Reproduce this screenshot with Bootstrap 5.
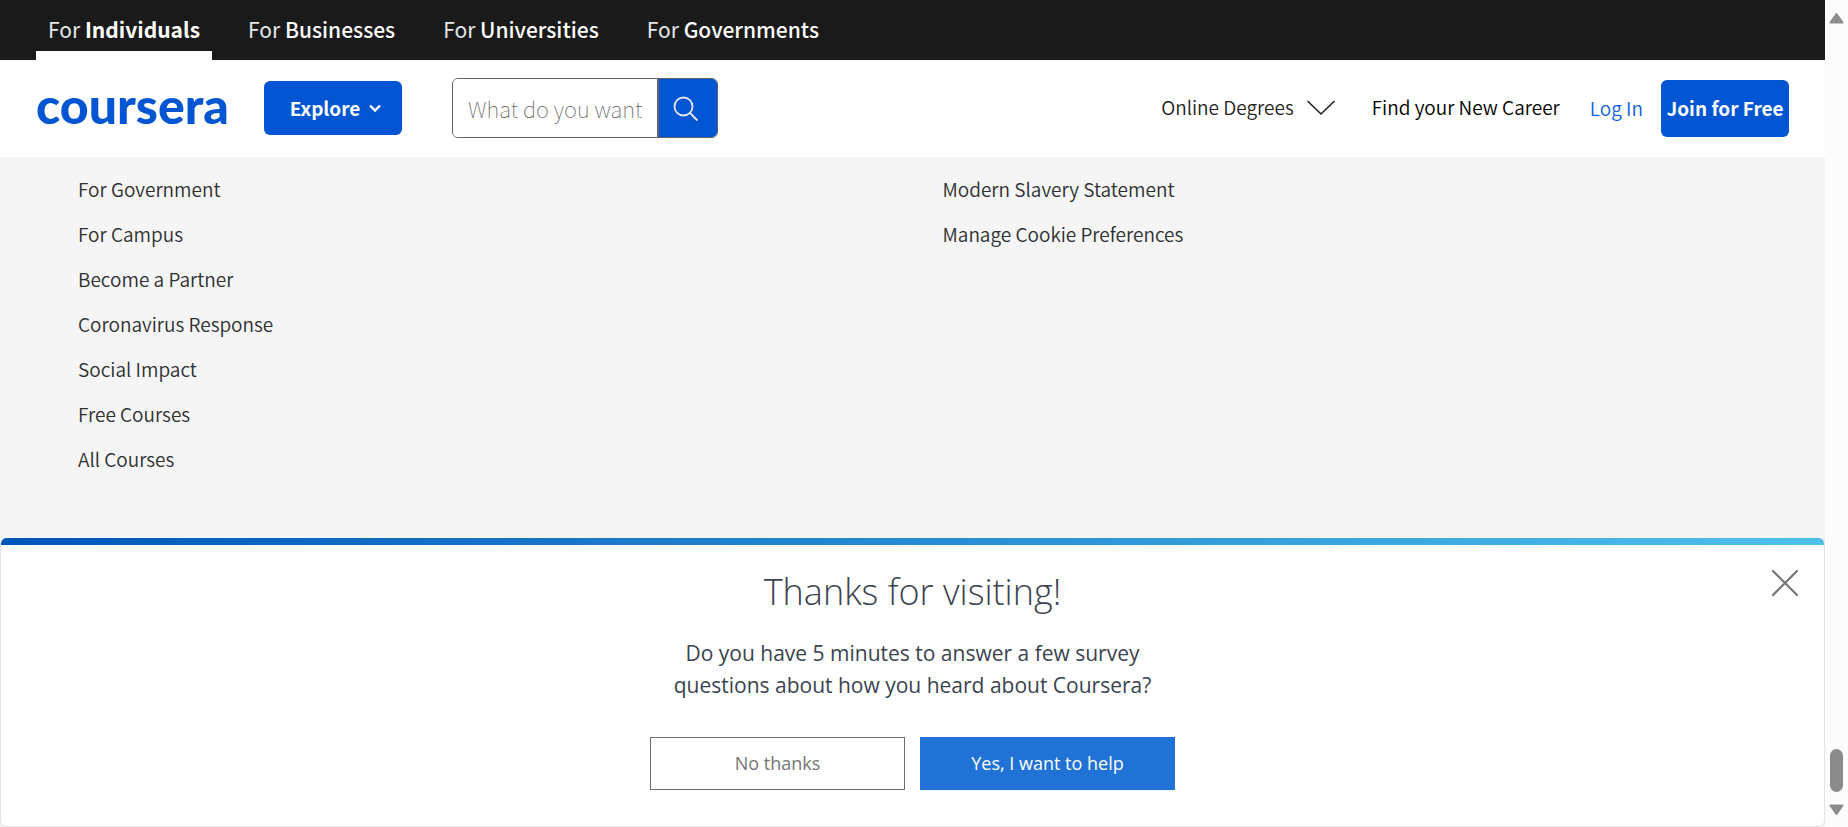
<!DOCTYPE html>
<html lang="en">
<head>
<meta charset="utf-8">
<meta name="viewport" content="width=device-width, initial-scale=1">
<title>Coursera</title>
<link href="https://cdn.jsdelivr.net/npm/bootstrap@5.3.0/dist/css/bootstrap.min.css" rel="stylesheet">
<style>
:root { --brand: #0056d2; --ink: #1f1f1f; }
body { font-family: "Noto Sans CJK SC", "Noto Sans", sans-serif; font-size: 19px; line-height: 24px; color: var(--ink); background: #fff; }
a { text-decoration: none; }

.audience-bar { background: #1a1a1a; padding: 0 36px; gap: 24px; height: 60px; }
.audience-bar .nav-link { color: #fff; font-size: 21px; line-height: 30px; padding: 14px 12px 7px; border-bottom: 9px solid transparent; font-weight: 500; }
.audience-bar .nav-link span { font-weight: 400; color: #e5e7e8; }
.audience-bar .nav-link.active { border-color: #fff; font-weight: 700; }

.site-header { padding: 0 36px 1px; height: 97px; }
.wordmark { font-family: Lato, sans-serif; font-weight: 900; font-size: 50px; line-height: 60px; color: var(--brand); width: 192px; margin-right: 36px; padding-bottom: 6px; }
.btn-brand { background: var(--brand); color: #fff; font-weight: 700; border: 0; border-radius: 6px; }
.btn-brand:hover { background: #00419e; color: #fff; }
.btn-explore { width: 138px; height: 54px; font-size: 19px; padding: 0 0 0 6px; margin-right: 50px; }
.btn-join { width: 128px; height: 57px; font-size: 19px; }
.search-box { width: 266px; height: 60px; border: 1px solid #636363; border-radius: 6px; overflow: hidden; }
.search-box input { border: 0; font-size: 22px; font-weight: 100; padding: 0 15px; border-radius: 0; box-shadow: none; }
.search-box input::placeholder { color: #636363; opacity: 1; }
.search-box button { background: var(--brand); width: 60px; border: 0; border-left: 2px solid #636363; padding: 0 4px 0 0; flex: none; }
.header-links { gap: 32px; padding-bottom: 2px; }
.header-links a { color: #000; font-weight: 350; }
.header-links .degrees { color: var(--ink); }
.login-link { color: #0f5fe0; font-weight: 350; margin: 0 18px 0 30px; }

.page-footer { background: #f5f5f5; padding: 9px 48px 0; }
.page-footer .col-6 { padding-left: 30px; }
.page-footer li { padding: 11px 0 10px; }
.page-footer a { color: #2d2f31; font-weight: 350; }

.survey-wrap { background: #f5f5f5; }
.survey { font-family: "Open Sans", sans-serif; background: #fff; color: #3b4350; border: 1px solid #e3e3e3; border-top: 0; border-radius: 6px; overflow: hidden; height: 289px; }
.survey-stripe { height: 7px; background: linear-gradient(90deg, #0056b9, #4fc0ec); }
.survey h2 { font-size: 36px; line-height: 48px; font-weight: 300; margin: 23px 0 21px; }
.survey p { font-size: 21px; line-height: 32px; margin-bottom: 36px; }
.survey-actions { gap: 15px; }
.survey-actions .btn { width: 255px; height: 53px; border-radius: 0; font-size: 18px; }
.btn-decline { border: 1px solid #6d6d6d; color: #757575; }
.btn-accept { background: #2172d7; color: #fff; font-weight: 500; }
.survey-close { top: 25px; right: 19px; padding: 6px; line-height: 0; }

.scroll-rail { width: 23px; background: #fcfcfc; padding: 12px 0 11px; }
.scroll-thumb { width: 13px; height: 43px; border-radius: 7px; background: #8b8b8b; margin-bottom: 12px; }
</style>
</head>
<body>
<div class="d-flex min-vh-100">
  <div class="d-flex flex-column flex-grow-1">
    <nav class="nav audience-bar flex-nowrap" aria-label="Audience">
      <a class="nav-link active" href="#"><span>For</span> Individuals</a>
      <a class="nav-link" href="#"><span>For</span> Businesses</a>
      <a class="nav-link" href="#"><span>For</span> Universities</a>
      <a class="nav-link" href="#"><span>For</span> Governments</a>
    </nav>

    <header class="site-header d-flex align-items-center bg-white">
      <a class="wordmark" href="#">coursera</a>
      <button class="btn btn-brand btn-explore d-flex align-items-center justify-content-center gap-2" type="button">Explore
        <svg width="14" height="10" viewBox="0 0 14 10" fill="none" stroke="#fff" stroke-width="2.4" aria-hidden="true"><path d="M2 2.500 7 7.500 12 2.500"/></svg>
      </button>
      <form class="search-box d-flex" role="search">
        <input class="form-control" type="text" placeholder="What do you want to learn?" aria-label="Search">
        <button type="submit" aria-label="Submit search">
          <svg width="26" height="26" viewBox="0 0 26 26" fill="none" stroke="#e5e7e8" stroke-width="1.8" aria-hidden="true"><circle cx="10.500" cy="10.500" r="9"/><path d="M17 17 24.500 24.500"/></svg>
        </button>
      </form>
      <div class="header-links d-flex ms-auto">
        <a class="degrees d-flex align-items-center" href="#">Online Degrees
          <svg class="ms-2" width="38" height="18" viewBox="0 0 38 18" fill="none" stroke="#1f1f1f" stroke-width="1.6" aria-hidden="true"><path d="M5.500 3 19 16 32.500 3"/></svg>
        </a>
        <a href="#">Find your New Career</a>
      </div>
      <a class="login-link" href="#">Log In</a>
      <button class="btn btn-brand btn-join p-0" type="button">Join for Free</button>
    </header>

    <footer class="page-footer flex-grow-1">
      <div class="row g-0">
        <ul class="col-6 list-unstyled mb-0">
          <li><a href="#">For Government</a></li>
          <li><a href="#">For Campus</a></li>
          <li><a href="#">Become a Partner</a></li>
          <li><a href="#">Coronavirus Response</a></li>
          <li><a href="#">Social Impact</a></li>
          <li><a href="#">Free Courses</a></li>
          <li><a href="#">All Courses</a></li>
        </ul>
        <ul class="col-6 list-unstyled mb-0">
          <li><a href="#">Modern Slavery Statement</a></li>
          <li><a href="#">Manage Cookie Preferences</a></li>
        </ul>
      </div>
    </footer>

    <div class="survey-wrap">
      <section class="survey position-relative text-center" aria-labelledby="survey-title">
        <div class="survey-stripe"></div>
        <button class="survey-close btn border-0 position-absolute" type="button" aria-label="Close">
          <svg width="28" height="28" viewBox="0 0 28 28" stroke="#757575" stroke-width="2.200" stroke-linecap="round" aria-hidden="true"><path d="M2 2 26 26M26 2 2 26"/></svg>
        </button>
        <h2 id="survey-title">Thanks for visiting!</h2>
        <p>Do you have 5 minutes to answer a few survey<br>questions about how you heard about Coursera?</p>
        <div class="survey-actions d-flex justify-content-center">
          <button class="btn btn-decline" type="button">No thanks</button>
          <button class="btn btn-accept" type="button">Yes, I want to help</button>
        </div>
      </section>
    </div>
  </div>

  <div class="scroll-rail d-flex flex-column align-items-center flex-shrink-0" aria-hidden="true">
    <svg width="15" height="12" viewBox="0 0 15 12" fill="#8b8b8b" stroke="#8b8b8b" stroke-width="2" stroke-linejoin="round"><path d="M7.500 2 13.500 10.500H1.500z"/></svg>
    <div class="scroll-thumb mt-auto"></div>
    <svg width="15" height="12" viewBox="0 0 15 12" fill="#8b8b8b" stroke="#8b8b8b" stroke-width="2" stroke-linejoin="round"><path d="M7.500 10 13.500 1.500H1.500z"/></svg>
  </div>
</div>
<script src="https://cdn.jsdelivr.net/npm/bootstrap@5.3.0/dist/js/bootstrap.bundle.min.js"></script>
</body>
</html>
